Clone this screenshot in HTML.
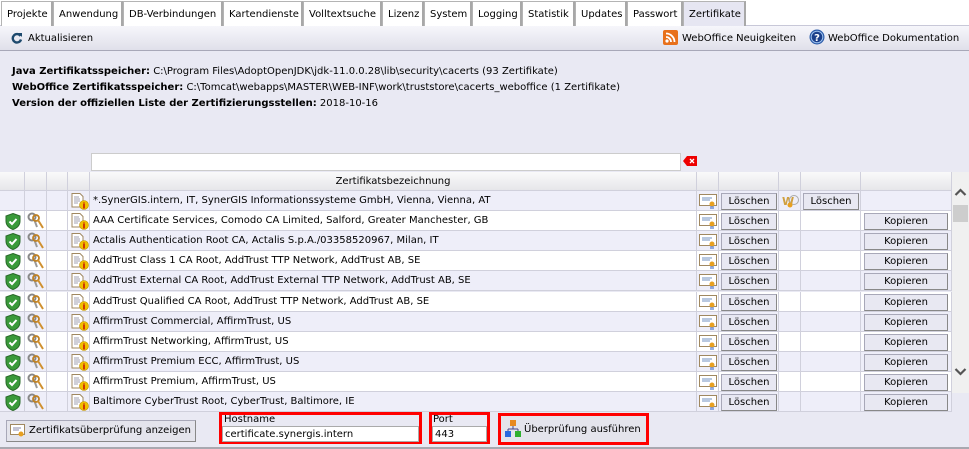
<!DOCTYPE html>
<html><head><meta charset="utf-8"><style>
*{box-sizing:border-box;margin:0;padding:0}
html,body{width:969px;height:449px;overflow:hidden}
body{background:#e9e9f3;font-family:"DejaVu Sans",Verdana,sans-serif;font-size:10px;color:#000;position:relative;white-space:nowrap}
.a{position:absolute}
.tabs{left:0;top:0;width:969px;height:26px;background:#fff;border-bottom:1px solid #c8c8d8}
.tab{position:absolute;top:1px;height:25px;background:#fff;border:1px solid #b4b4b4;border-bottom:none;border-right:2px solid #a8a8a8;padding:7px 0 0 5px;overflow:hidden}
.tab.act{background:#e6e6f2}
.tb{left:0;top:26px;width:969px;height:25px;background:linear-gradient(#f6f6fb,#e0e0ea);border-bottom:1px solid #a8a8b8}
.row{position:absolute;left:0;width:952px;height:20px;border-bottom:1px solid #d0d0dc}
.c{position:absolute;top:0;height:20px;border-right:1px solid #d0d0dc}
.btn{position:absolute;top:2px;height:17px;background:#e8e8f2;border:1px solid #a8a8b8;border-right-color:#888;border-bottom-color:#888;text-align:center;line-height:15px;overflow:hidden}
.txt{position:absolute;left:93px;top:4px}
.red{position:absolute;border:3px solid #f00}
</style></head><body>
<div class="a tabs">
<div class="tab" style="left:1px;width:52px">Projekte</div>
<div class="tab" style="left:53px;width:70px">Anwendung</div>
<div class="tab" style="left:123px;width:100px">DB-Verbindungen</div>
<div class="tab" style="left:223px;width:80px">Kartendienste</div>
<div class="tab" style="left:303px;width:79px">Volltextsuche</div>
<div class="tab" style="left:382px;width:42px">Lizenz</div>
<div class="tab" style="left:424px;width:48px">System</div>
<div class="tab" style="left:472px;width:50px">Logging</div>
<div class="tab" style="left:522px;width:53px">Statistik</div>
<div class="tab" style="left:575px;width:52px">Updates</div>
<div class="tab" style="left:627px;width:56px">Passwort</div>
<div class="tab act" style="left:683px;width:63px">Zertifikate</div>
</div>
<div class="a tb">
<svg class="a" style="left:11px;top:6px" width="12" height="12" viewBox="0 0 12 12"><path d="M9.5 4A4.2 4.2 0 1 0 10 7.5" fill="none" stroke="#1e4a6e" stroke-width="2.4"/><path d="M7 1L11 1 11 5Z" fill="#1e4a6e"/></svg>
<div class="a" style="left:28px;top:7px">Aktualisieren</div>
<svg class="a" style="left:663px;top:4px" width="15" height="15"><rect width="15" height="15" rx="2" fill="#e8701a"/><circle cx="4" cy="11" r="1.6" fill="#fff"/><path d="M3 7a5 5 0 0 1 5 5M3 3.5a8.5 8.5 0 0 1 8.5 8.5" fill="none" stroke="#fff" stroke-width="1.8"/></svg>
<div class="a" style="left:682px;top:7px">WebOffice Neuigkeiten</div>
<svg class="a" style="left:809px;top:3px" width="16" height="16"><circle cx="8" cy="8" r="7.5" fill="#2a5aa8"/><circle cx="8" cy="8" r="5.8" fill="#1a3f8a" stroke="#9cc0ee" stroke-width="1"/><text x="8" y="12" font-size="10" font-weight="bold" fill="#fff" text-anchor="middle" font-family="DejaVu Sans">?</text></svg>
<div class="a" style="left:828px;top:7px">WebOffice Dokumentation</div>
</div>
<div class="a" style="left:12px;top:64px;line-height:16px">
<b>Java Zertifikatsspeicher:</b> C:\Program Files\AdoptOpenJDK\jdk-11.0.0.28\lib\security\cacerts (93 Zertifikate)<br>
<b>WebOffice Zertifikatsspeicher:</b> C:\Tomcat\webapps\MASTER\WEB-INF\work\truststore\cacerts_weboffice (1 Zertifikate)<br>
<b>Version der offiziellen Liste der Zertifizierungsstellen:</b> 2018-10-16</div>
<div class="a" style="left:91px;top:153px;width:590px;height:18px;background:#fff;border:1px solid #ccc"></div>
<svg class="a" style="left:683px;top:156px" width="14" height="10"><path d="M0 5L4 0H14V10H4Z" fill="#e00"/><path d="M7 3l4 4M11 3l-4 4" stroke="#fff" stroke-width="1.3"/></svg>
<div class="row" style="top:172px;height:19px;background:linear-gradient(#fafafa,#e6e6ea)">
<div class="c" style="left:0;width:25px"></div><div class="c" style="left:25px;width:22px"></div><div class="c" style="left:47px;width:21px"></div><div class="c" style="left:68px;width:22px"></div><div class="c" style="left:90px;width:607px;text-align:center;padding-top:4px">Zertifikatsbezeichnung</div><div class="c" style="left:697px;width:22px"></div><div class="c" style="left:719px;width:60px"></div><div class="c" style="left:779px;width:22px"></div><div class="c" style="left:801px;width:60px"></div><div class="c" style="left:861px;width:91px"></div>
</div>
<div id="rows"></div>
<div class="a" style="left:952px;top:172px;width:17px;height:221px;background:#f0f0f0"></div>
<svg class="a" style="left:954px;top:187px" width="13" height="10"><path d="M1.5 8L6.5 3 11.5 8" fill="none" stroke="#555" stroke-width="2.2"/></svg>
<div class="a" style="left:953px;top:205px;width:15px;height:17px;background:#cdcdcd"></div>
<svg class="a" style="left:954px;top:367px" width="13" height="10"><path d="M1.5 2L6.5 7 11.5 2" fill="none" stroke="#555" stroke-width="2.2"/></svg>
<div class="btn" style="left:6px;top:420px;width:190px;height:22px;line-height:20px;text-align:left;padding-left:22px;background:#e4e4ec">Zertifikatsüberprüfung anzeigen</div>
<svg class="a" style="left:10px;top:424px" width="15" height="14"><rect x="0.5" y="0.5" width="14" height="10" fill="#fff" stroke="#a08860"/><path d="M3 4h8M3 6h6" stroke="#88a"/><circle cx="11" cy="10" r="2.5" fill="#e8a020"/></svg>
<div class="red" style="left:219px;top:412px;width:203px;height:32px"></div>
<div class="a" style="left:224px;top:414px">Hostname</div>
<div class="a" style="left:222px;top:426px;width:197px;height:16px;background:#fff;border:1px solid #aaa;padding:2px 0 0 2px">certificate.synergis.intern</div>
<div class="red" style="left:429px;top:412px;width:61px;height:32px"></div>
<div class="a" style="left:433px;top:414px">Port</div>
<div class="a" style="left:432px;top:426px;width:55px;height:16px;background:#fff;border:1px solid #aaa;padding:2px 0 0 2px">443</div>
<div class="red" style="left:498px;top:413px;width:151px;height:32px;background:#e4e4ec"></div>
<svg class="a" style="left:505px;top:420px" width="16" height="18"><rect x="5" y="0" width="6" height="6" fill="#e88a20"/><path d="M8 6v3M3 9h10M3 9v3M13 9v3" stroke="#448"/><rect x="0" y="11" width="6" height="6" fill="#2a6ae0"/><rect x="10" y="11" width="6" height="6" fill="#30b030"/></svg>
<div class="a" style="left:524px;top:424px">Überprüfung ausführen</div>
<div class="a" style="left:0;top:447px;width:969px;height:2px;background:#a8a8b0"></div>
<script>
var names=["*.SynerGIS.intern, IT, SynerGIS Informationssysteme GmbH, Vienna, Vienna, AT","AAA Certificate Services, Comodo CA Limited, Salford, Greater Manchester, GB","Actalis Authentication Root CA, Actalis S.p.A./03358520967, Milan, IT","AddTrust Class 1 CA Root, AddTrust TTP Network, AddTrust AB, SE","AddTrust External CA Root, AddTrust External TTP Network, AddTrust AB, SE","AddTrust Qualified CA Root, AddTrust TTP Network, AddTrust AB, SE","AffirmTrust Commercial, AffirmTrust, US","AffirmTrust Networking, AffirmTrust, US","AffirmTrust Premium ECC, AffirmTrust, US","AffirmTrust Premium, AffirmTrust, US","Baltimore CyberTrust Root, CyberTrust, Baltimore, IE"];
var cols=[[0,25],[25,22],[47,21],[68,22],[90,607],[697,22],[719,60],[779,22],[801,60],[861,91]];
var shield='<svg class="a" style="left:5px;top:2px" width="16" height="17"><path d="M8 0.5L15 3V8C15 12 12 15 8 16.5 4 15 1 12 1 8V3Z" fill="#3a9a3a" stroke="#2a6a2a"/><path d="M4.5 8.5l2.5 2.5 4.5-5" fill="none" stroke="#fff" stroke-width="2"/></svg>';
var key='<svg class="a" style="left:27px;top:1px" width="18" height="18"><circle cx="5" cy="5" r="3.5" fill="none" stroke="#888" stroke-width="2"/><path d="M7 7l3 8" stroke="#999" stroke-width="2"/><circle cx="9" cy="6" r="3" fill="none" stroke="#c08020" stroke-width="1.8"/><path d="M11 8l5 8" stroke="#d09030" stroke-width="2"/></svg>';
var doc='<svg class="a" style="left:71px;top:2px" width="18" height="17"><path d="M1 0.5h8l3 3V14H1Z" fill="#fff" stroke="#a08860"/><path d="M3 4h5M3 6h6M3 8h6M3 10h4" stroke="#a0a0b0"/><circle cx="13" cy="12" r="4.5" fill="#f0c000" stroke="#c09000" stroke-width=".6"/><text x="13" y="15.5" font-size="8" font-weight="bold" fill="#c00000" text-anchor="middle" font-family="DejaVu Sans">i</text></svg>';
var cert='<svg class="a" style="left:699px;top:3px" width="18" height="15"><rect x="0.5" y="0.5" width="17" height="11" fill="#fff" stroke="#a08860"/><path d="M3 4h10M3 6h8" stroke="#7090c0"/><circle cx="13" cy="10" r="2.5" fill="#e8a020"/><path d="M12 12v3M14 12v3" stroke="#3060c0"/></svg>';
var h='';
for(var i=0;i<names.length;i++){
 var t=191+i*20.1;
 h+='<div class="row" style="top:'+Math.round(t)+'px;background:'+(i%2?'#fff':'#eeeef9')+'">';
 for(var j=0;j<cols.length;j++)h+='<div class="c" style="left:'+cols[j][0]+'px;width:'+cols[j][1]+'px"></div>';
 if(i>0){h+=shield+key;}
 h+=doc+'<div class="txt">'+names[i]+'</div>'+cert;
 h+='<div class="btn" style="left:721px;width:56px">Löschen</div>';
 if(i==0){h+='<svg class="a" style="left:781px;top:2px" width="18" height="17"><text x="1" y="12" font-size="11" font-weight="bold" fill="#d0a040" font-family="DejaVu Sans">W</text><circle cx="13" cy="7" r="4.5" fill="none" stroke="#aaa"/><circle cx="9" cy="12" r="2.5" fill="#e8a020"/></svg><div class="btn" style="left:803px;width:56px">Löschen</div>';}
 else h+='<div class="btn" style="left:864px;width:84px">Kopieren</div>';
 h+='</div>';
}
document.getElementById('rows').outerHTML=h;
</script>
</body></html>
